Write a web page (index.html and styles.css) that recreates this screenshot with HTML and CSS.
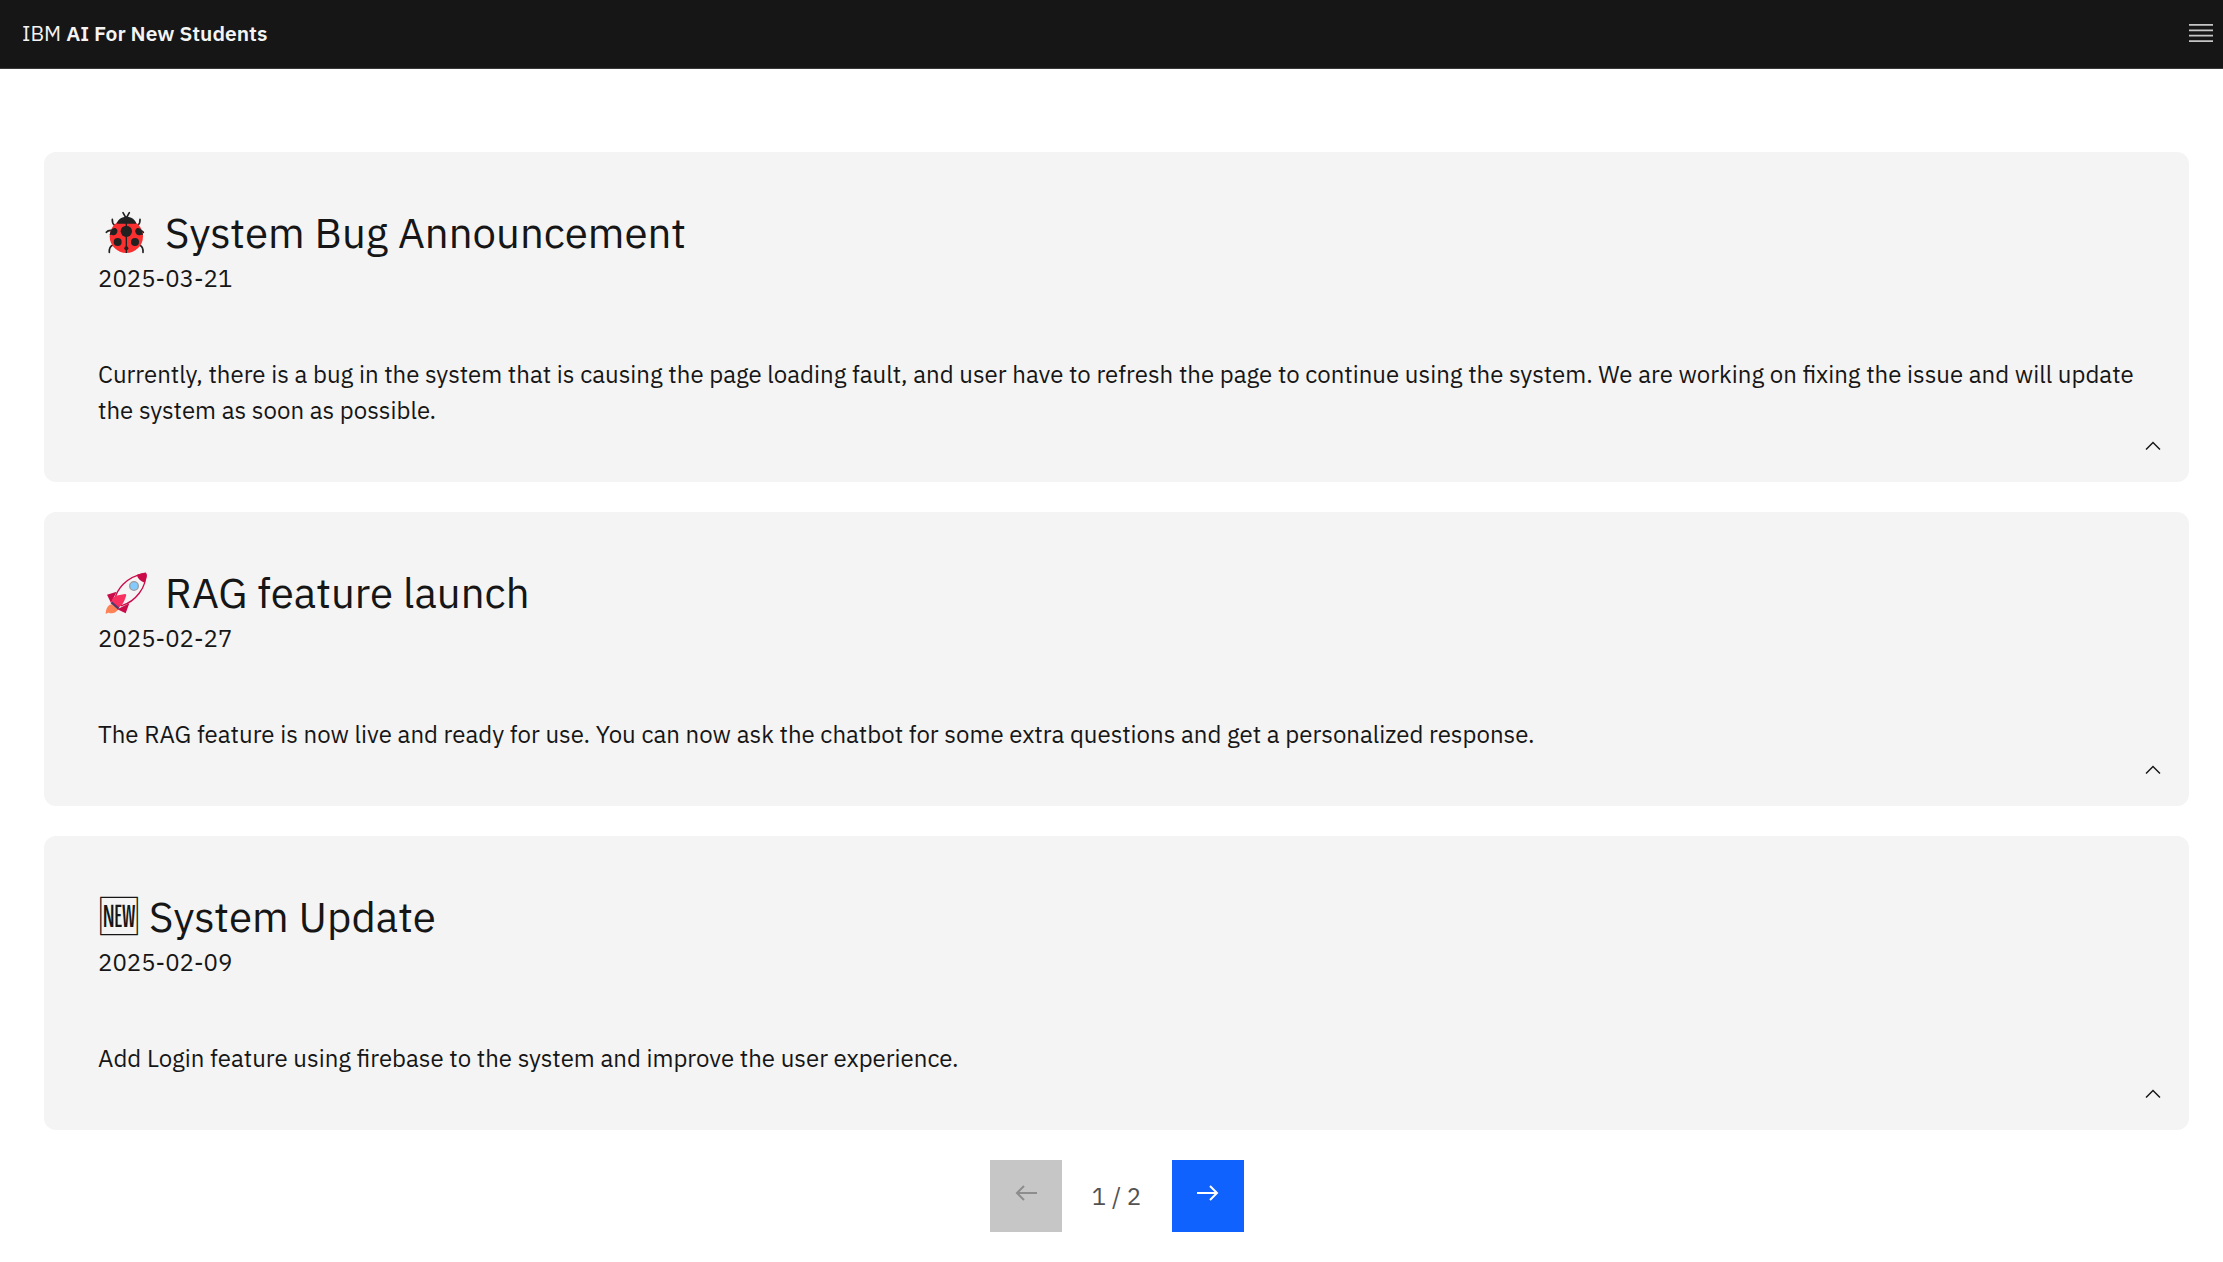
FILE: index.html
```html
<!DOCTYPE html>
<html lang="en">
<head>
<meta charset="utf-8">
<title>IBM AI For New Students</title>
<meta name="viewport" content="width=device-width, initial-scale=1">
<link rel="stylesheet" href="styles.css">
</head>
<body>
<header class="header">
  <a class="brand" href="#">IBM <strong>AI For New Students</strong></a>
  <button class="menu" type="button" aria-label="Open menu">
    <svg viewBox="0 0 20 20" fill="currentColor"><path d="M2 14.8h16V16H2zM2 11.2h16v1.2H2zM2 7.6h16v1.2H2zM2 4h16v1.2H2z"/></svg>
  </button>
</header>
<main class="page">
  <article class="card">
    <h2 class="title">
      <svg class="emoji" viewBox="-6 3 174 162" aria-hidden="true">
        <g fill="none" stroke="#212121" stroke-width="5" stroke-linecap="round">
          <path d="M69 23l8 14M88 23l-8 14M37 43q-1 12 7 18M120 43q1 12-7 18M19 82q6-8 20-5M130 82q-6-8-20-5M28 142q-1-16 9-21M129 142q1-16-9-21"/>
        </g>
        <circle cx="79" cy="94" r="50" fill="#f92f30"/>
        <path fill="#212121" d="M50 56c7-28 52-28 59 0z"/>
        <g fill="#212121">
          <path d="M77 54h4v90h-4z"/>
          <circle cx="79" cy="79" r="17"/>
          <path d="M32 77q5-10 14-8a11 11 0 1 1-11 20l-6 1zM126 77q-5-10-14-8a11 11 0 1 0 11 20l6 1z"/>
          <circle cx="53" cy="111" r="12"/><circle cx="105" cy="111" r="12"/><circle cx="79" cy="130" r="6"/>
        </g>
      </svg>
      <span>System Bug Announcement</span>
    </h2>
    <time class="date" datetime="2025-03-21">2025-03-21</time>
    <p class="text">Currently, there is a bug in the system that is causing the page loading fault, and user have to refresh the page to continue using the system. We are working on fixing the issue and will update the system as soon as possible.</p>
    <button class="toggle" type="button" aria-label="Collapse"><svg viewBox="0 0 16 16" fill="currentColor"><path d="M8 5l5 5-.7.7L8 6.4l-4.3 4.3L3 10z"/></svg></button>
  </article>
  <article class="card">
    <h2 class="title">
      <svg class="emoji" viewBox="-6 3 174 162" aria-hidden="true">
        <path fill="#ff8257" d="M34 118c-12 4-16 14-17 28 7-1 8-4 11-2 9 2 23-1 27-13z"/>
        <path fill="#ca0b4a" d="M50 80L21 89l12 25zM88 115l-11 30-25-12z"/>
        <path fill="#f4f4f4" stroke="#ca0b4a" stroke-width="4" d="M44 104C50 76 75 35 136 25c6 40-30 85-71 97z"/>
        <path fill="#ca0b4a" d="M110 30c10-4 22-8 28-6 6 5 1 19-4 29-11-3-20-11-24-23z"/>
        <path fill="#f92f60" d="M35 113c1-13 8-20 20-22l20-4c5 0 4 5 2 9-5 14-7 22-21 32z"/>
        <path stroke="#533566" stroke-width="7" d="M34 112l22 19"/>
        <circle cx="102" cy="63" r="13" fill="#83cbff" stroke="#9b9b9b" stroke-width="4"/>
      </svg>
      <span>RAG feature launch</span>
    </h2>
    <time class="date" datetime="2025-02-27">2025-02-27</time>
    <p class="text">The RAG feature is now live and ready for use. You can now ask the chatbot for some extra questions and get a personalized response.</p>
    <button class="toggle" type="button" aria-label="Collapse"><svg viewBox="0 0 16 16" fill="currentColor"><path d="M8 5l5 5-.7.7L8 6.4l-4.3 4.3L3 10z"/></svg></button>
  </article>
  <article class="card">
    <h2 class="title"><span class="glyph">🆕</span><span>System Update</span></h2>
    <time class="date" datetime="2025-02-09">2025-02-09</time>
    <p class="text">Add Login feature using firebase to the system and improve the user experience.</p>
    <button class="toggle" type="button" aria-label="Collapse"><svg viewBox="0 0 16 16" fill="currentColor"><path d="M8 5l5 5-.7.7L8 6.4l-4.3 4.3L3 10z"/></svg></button>
  </article>
  <nav class="pager" aria-label="Pagination">
    <button class="step" type="button" aria-label="Previous page" disabled><svg viewBox="0 0 24 24"><path d="M23 12H3M10 5l-7 7 7 7"/></svg></button>
    <span class="count">1 / 2</span>
    <button class="step" type="button" aria-label="Next page"><svg viewBox="0 0 24 24"><path d="M1 12h20M14 5l7 7-7 7"/></svg></button>
  </nav>
</main>
</body>
</html>
```
FILE: styles.css
```css
* { box-sizing: border-box; }

body {
  margin: 0;
  background: #fff;
  color: #161616;
  font: 24px/36px "IBM Plex Sans", Roboto, Arial, sans-serif;
}

button {
  padding: 0;
  border: 0;
  background: none;
  color: inherit;
  font: inherit;
  cursor: pointer;
}

svg { display: block; }

.header {
  display: flex;
  align-items: center;
  justify-content: space-between;
  height: 69px;
  padding: 0 7px 2px 22px;
  border-bottom: 1px solid #393939;
  background: #161616;
}

.brand {
  color: #f4f4f4;
  font-size: 21px;
  text-decoration: none;
}

.brand strong { font-weight: 600; }

.menu { color: #c6c6c6; }
.menu svg { width: 30px; height: 30px; }

.page {
  display: flex;
  flex-direction: column;
  gap: 30px;
  padding: 83px 34px 30px 44px;
}

.card {
  position: relative;
  padding: 54px;
  border-radius: 12px;
  background: #f4f4f4;
}

.title {
  display: flex;
  gap: 9px;
  margin: 0;
  font-size: 42px;
  font-weight: 400;
  line-height: 54px;
}

.emoji { width: 58px; height: 54px; }
.glyph {
  font-family: "Noto Sans CJK JP", sans-serif;
  line-height: 48px;
}

.date { display: block; }
.text { margin: 60px 0 0; }

.toggle {
  position: absolute;
  right: 24px;
  bottom: 24px;
}
.toggle svg { width: 24px; height: 24px; }

.pager {
  display: flex;
  align-items: center;
  justify-content: center;
  gap: 30px;
  color: #525252;
}

.count {
  min-width: 50px;
  text-align: center;
}

.step {
  display: flex;
  justify-content: center;
  width: 72px;
  height: 72px;
  padding-top: 21px;
  background: #0f62fe;
  color: #fff;
}
.step:disabled {
  background: #c6c6c6;
  color: #8d8d8d;
  cursor: not-allowed;
}
.step svg {
  width: 24px;
  height: 24px;
  fill: none;
  stroke: currentColor;
  stroke-width: 2;
}
```
